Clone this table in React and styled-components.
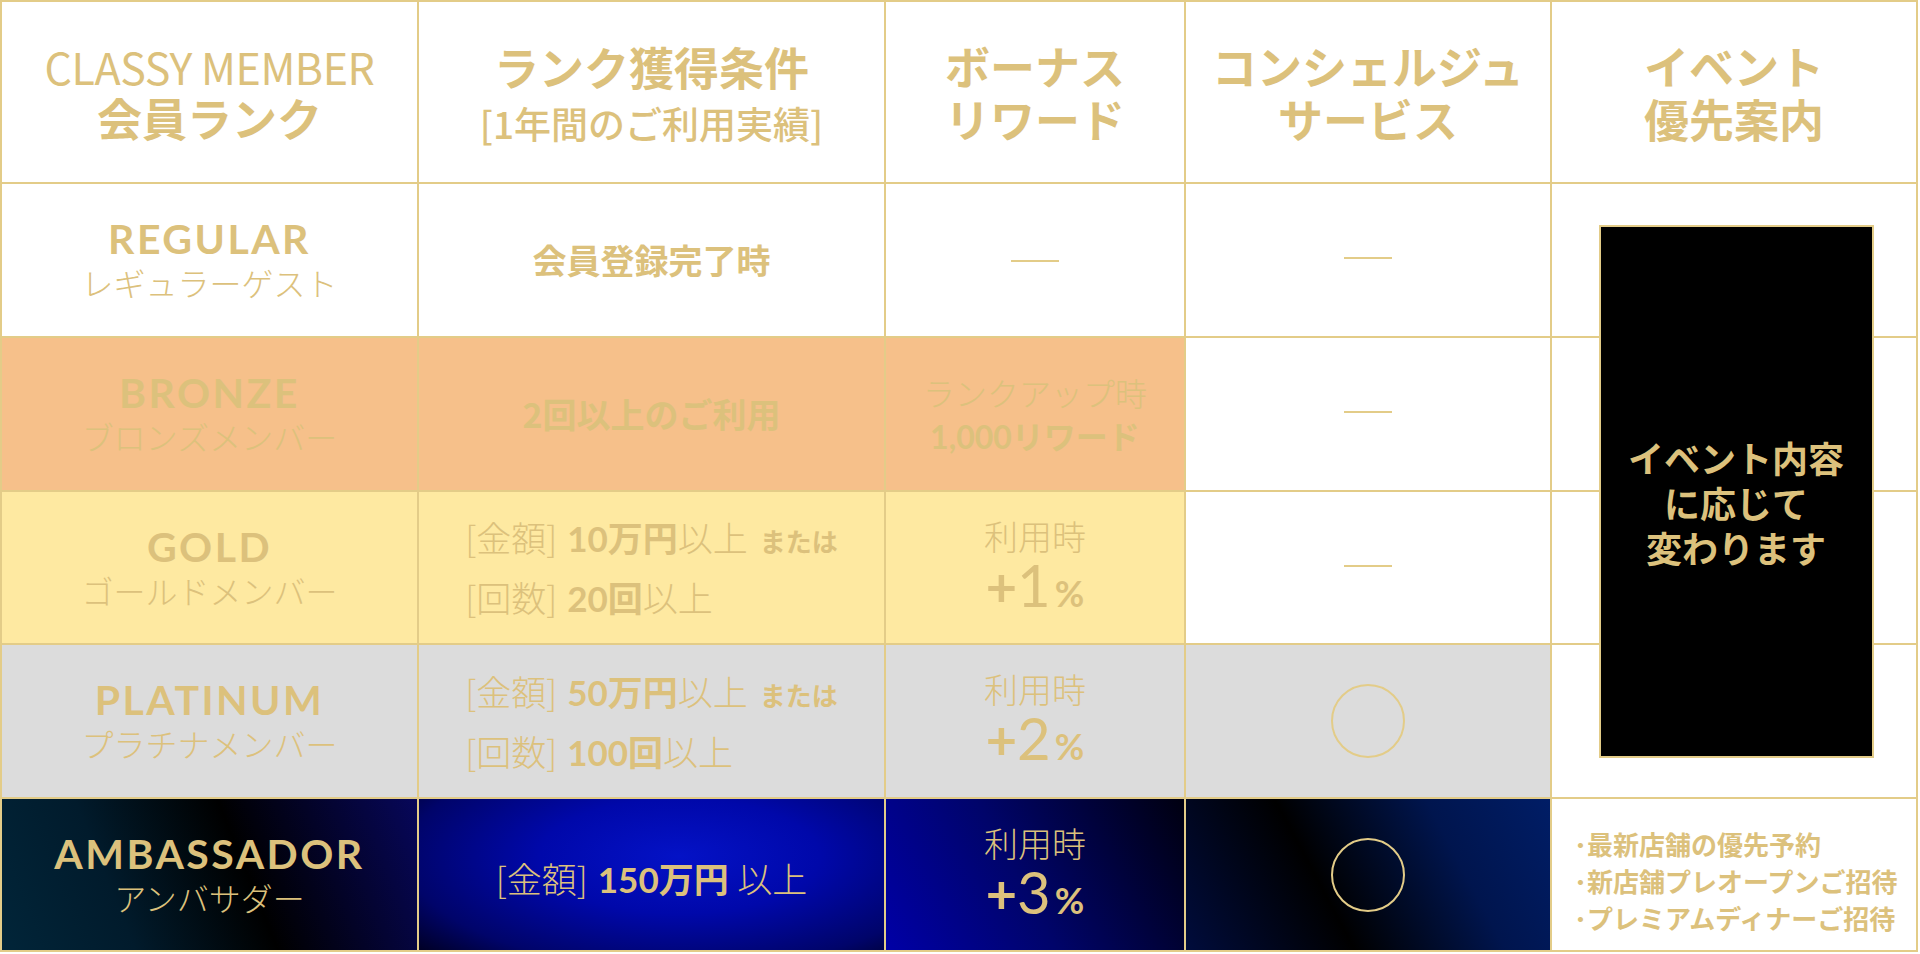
import React from 'react';
import styled, { createGlobalStyle } from 'styled-components';

const GOLD = '#dcc17c';
const LINE = '#e3cc88';

const GlobalStyle = createGlobalStyle`
  body {
    margin: 0;
    background: #fff;
    font-family: "Lato", "Noto Sans CJK JP", sans-serif;
    color: ${GOLD};
  }
`;

const tones = {
  white: '#ffffff',
  bronze: '#f6c08a',
  gold: '#fee9a1',
  platinum: '#dcdcdc',
  amb1: 'linear-gradient(68deg, #012539 0%, #011b2c 28%, #000000 58%, #07075a 100%)',
  amb2: 'radial-gradient(ellipse 75% 95% at 56% 38%, #0412c6 0%, #0008aa 40%, #00046a 78%, #000022 100%)',
  amb3: 'linear-gradient(62deg, #0000a6 0%, #00046a 45%, #000010 100%)',
  amb4: 'linear-gradient(62deg, #000c3c 0%, #000000 38%, #00154e 72%, #001d66 100%)',
};

const Table = styled.div`
  display: grid;
  grid-template-columns: 417px 467px 300px 366px 366px;
  grid-template-rows: 182px 154px 154px 153px 154px 153px;
  width: max-content;
  border-top: 2px solid ${LINE};
  border-left: 2px solid ${LINE};
`;

const Cell = styled.div`
  display: flex;
  flex-direction: column;
  align-items: center;
  justify-content: center;
  text-align: center;
  padding-top: ${(p) => p.$push || 0}px;
  border-right: 2px solid ${LINE};
  border-bottom: 2px solid ${LINE};
  background: ${(p) => tones[p.$tone || 'white']};
`;

const EventCell = styled(Cell)`
  grid-column: 5;
  grid-row: ${(p) => p.$row};
`;

const EventBox = styled.div`
  grid-column: 5;
  grid-row: 2 / 6;
  align-self: center;
  justify-self: center;
  position: relative;
  z-index: 1;
  box-sizing: border-box;
  width: 275px;
  height: 533px;
  margin-left: 2px;
  background: #000;
  border: 2px solid ${LINE};
  display: flex;
  align-items: center;
  justify-content: center;
  padding-top: 22px;
  font-family: "Noto Sans CJK JP", sans-serif;
  font-weight: 700;
  font-size: 36px;
  line-height: 45px;
  text-align: center;
`;

const HeadLatin = styled.div`
  font-family: "Noto Sans CJK JP", sans-serif;
  font-size: 43px;
  line-height: 50px;
  font-weight: 400;
  letter-spacing: -0.01em;
`;

const HeadMain = styled.div`
  font-family: "Noto Sans CJK JP", sans-serif;
  font-size: 45px;
  line-height: 53px;
  font-weight: 700;
`;

const HeadSub = styled.div`
  font-family: "Noto Sans CJK JP", sans-serif;
  font-size: 37px;
  line-height: 56px;
  margin-top: 2px;
  font-weight: 500;
`;

const RankName = styled.div`
  font-family: "Lato", sans-serif;
  font-size: 41px;
  line-height: 44px;
  font-weight: 700;
  letter-spacing: 0.06em;
`;

const RankKana = styled.div`
  font-family: "Noto Sans CJK JP", sans-serif;
  font-size: 32px;
  line-height: 42px;
  font-weight: 300;
`;

const Lines = styled.div`
  display: flex;
  flex-direction: column;
  align-items: ${(p) => (p.$left ? 'flex-start' : 'center')};
`;

const Line = styled.div`
  font-family: "Noto Sans CJK JP", sans-serif;
  font-size: ${(p) => p.$size || 34}px;
  line-height: ${(p) => p.$lh || 44}px;
  font-weight: ${(p) => p.$weight || 400};
  white-space: nowrap;
`;

const Light = styled.span`
  font-weight: 300;
`;

const Bracket = styled.span`
  font-weight: 300;
  margin-right: 10px;
`;

const Bold = styled.span`
  font-family: "Lato", "Noto Sans CJK JP", sans-serif;
  font-weight: 700;
`;

const Tiny = styled.span`
  font-weight: 700;
  font-size: 26px;
  margin-left: 12px;
`;

const Rate = styled.div`
  font-family: "Lato", sans-serif;
  font-size: 58px;
  line-height: 56px;
  font-weight: 400;
  white-space: nowrap;
`;

const Plus = styled.span`
  font-weight: 700;
  font-size: 54px;
`;

const Pct = styled.span`
  font-weight: 700;
  font-size: 36px;
  margin-left: 4px;
`;

const Dash = styled.div`
  width: 48px;
  height: 2px;
  background: ${LINE};
  margin-top: ${(p) => p.$shift || 0}px;
`;

const Circle = styled.div`
  width: 70px;
  height: 70px;
  border: 2px solid ${LINE};
  border-radius: 50%;
`;

const List = styled.ul`
  list-style: none;
  margin: 12px 0 0;
  padding: 0 0 0 22px;
  align-self: flex-start;
  text-align: left;
  font-family: "Noto Sans CJK JP", sans-serif;
  font-weight: 700;
  font-size: 26px;
  line-height: 37px;
`;

const Rank = ({ name, kana, tone }) => (
  <Cell $tone={tone}>
    <RankName>{name}</RankName>
    <RankKana>{kana}</RankKana>
  </Cell>
);

const Usage = ({ value, tone }) => (
  <Cell $tone={tone}>
    <Lines>
      <Line $weight={300} $size={34} $lh={42}>利用時</Line>
      <Rate>
        <Plus>+</Plus>
        {value}
        <Pct>%</Pct>
      </Rate>
    </Lines>
  </Cell>
);

const Condition = ({ amount, count, tone }) => (
  <Cell $tone={tone}>
    <Lines $left>
      <Line $size={35} $lh={56}>
        <Bracket>[金額]</Bracket>
        <Bold>{amount}</Bold>
        <Light>以上</Light>
        <Tiny>または</Tiny>
      </Line>
      <Line $size={35} $lh={56}>
        <Bracket>[回数]</Bracket>
        <Bold>{count}</Bold>
        <Light>以上</Light>
      </Line>
    </Lines>
  </Cell>
);

export default function App() {
  return (
    <>
      <GlobalStyle />
      <Table>
        <Cell>
          <HeadLatin>CLASSY MEMBER</HeadLatin>
          <HeadMain>会員ランク</HeadMain>
        </Cell>
        <Cell $push={6}>
          <HeadMain>ランク獲得条件</HeadMain>
          <HeadSub>[1年間のご利用実績]</HeadSub>
        </Cell>
        <Cell>
          <HeadMain>ボーナス</HeadMain>
          <HeadMain>リワード</HeadMain>
        </Cell>
        <Cell>
          <HeadMain>コンシェルジュ</HeadMain>
          <HeadMain>サービス</HeadMain>
        </Cell>
        <Cell>
          <HeadMain>イベント</HeadMain>
          <HeadMain>優先案内</HeadMain>
        </Cell>

        <Rank name="REGULAR" kana="レギュラーゲスト" />
        <Cell>
          <Line $weight={700}>会員登録完了時</Line>
        </Cell>
        <Cell>
          <Dash $shift={2} />
        </Cell>
        <Cell>
          <Dash $shift={-4} />
        </Cell>
        <EventCell $row={2} />

        <Rank name="BRONZE" kana="ブロンズメンバー" tone="bronze" />
        <Cell $tone="bronze">
          <Line $weight={700}>2回以上のご利用</Line>
        </Cell>
        <Cell $tone="bronze">
          <Lines>
            <Line $weight={300} $size={32} $lh={43}>ランクアップ時</Line>
            <Line $weight={700} $size={32} $lh={43}>
              <Bold>1,000</Bold>リワード
            </Line>
          </Lines>
        </Cell>
        <Cell>
          <Dash $shift={-4} />
        </Cell>
        <EventCell $row={3} />

        <Rank name="GOLD" kana="ゴールドメンバー" tone="gold" />
        <Condition amount="10万円" count="20回" tone="gold" />
        <Usage value="1" tone="gold" />
        <Cell>
          <Dash $shift={-4} />
        </Cell>
        <EventCell $row={4} />

        <Rank name="PLATINUM" kana="プラチナメンバー" tone="platinum" />
        <Condition amount="50万円" count="100回" tone="platinum" />
        <Usage value="2" tone="platinum" />
        <Cell $tone="platinum">
          <Circle />
        </Cell>
        <EventCell $row={5} />

        <Rank name="AMBASSADOR" kana="アンバサダー" tone="amb1" />
        <Cell $tone="amb2" $push={8}>
          <Line $size={35} $lh={44}>
            <Bracket>[金額]</Bracket>
            <Bold>150万円 </Bold>
            <Light>以上</Light>
          </Line>
        </Cell>
        <Usage value="3" tone="amb3" />
        <Cell $tone="amb4">
          <Circle />
        </Cell>
        <Cell>
          <List>
            <li>･最新店舗の優先予約</li>
            <li>･新店舗プレオープンご招待</li>
            <li>･プレミアムディナーご招待</li>
          </List>
        </Cell>

        <EventBox>
          イベント内容
          <br />
          に応じて
          <br />
          変わります
        </EventBox>
      </Table>
    </>
  );
}
